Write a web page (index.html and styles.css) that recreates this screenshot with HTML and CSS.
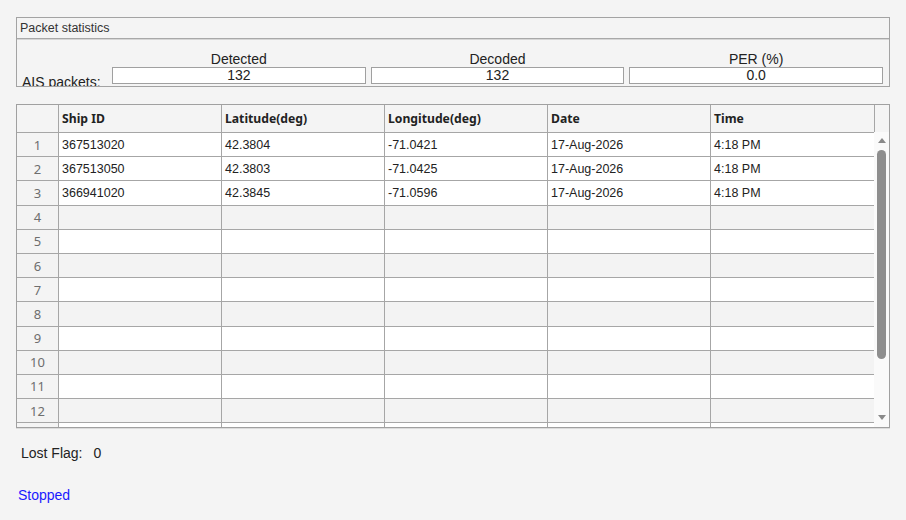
FILE: index.html
```html
<!DOCTYPE html>
<html lang="en">
<head>
    <meta charset="UTF-8">
    <title>AIS Receiver</title>
    <link rel="stylesheet" href="styles.css">
</head>
<body>
    <div class="app">
        <div class="panel">
            <div class="panel-title">Packet statistics</div>
            <div class="panel-body">
                <div class="stat-label">AIS packets:</div>
                <div class="stat">
                    <div class="stat-name">Detected</div>
                    <div class="stat-box">132</div>
                </div>
                <div class="stat">
                    <div class="stat-name">Decoded</div>
                    <div class="stat-box">132</div>
                </div>
                <div class="stat">
                    <div class="stat-name">PER (%)</div>
                    <div class="stat-box">0.0</div>
                </div>
            </div>
        </div>

        <div class="grid-wrap">
            <div class="grid-view">
                <table class="grid">
                    <thead>
                        <tr>
                            <th class="rh"></th>
                            <th>Ship ID</th>
                            <th>Latitude(deg)</th>
                            <th>Longitude(deg)</th>
                            <th>Date</th>
                            <th class="last">Time</th>
                        </tr>
                    </thead>
                    <tbody>
                        <tr class="filled"><td class="rh">1</td><td>367513020</td><td>42.3804</td><td>-71.0421</td><td>17-Aug-2026</td><td class="last">4:18 PM</td></tr>
                        <tr class="filled"><td class="rh">2</td><td>367513050</td><td>42.3803</td><td>-71.0425</td><td>17-Aug-2026</td><td class="last">4:18 PM</td></tr>
                        <tr class="filled"><td class="rh">3</td><td>366941020</td><td>42.3845</td><td>-71.0596</td><td>17-Aug-2026</td><td class="last">4:18 PM</td></tr>
                        <tr class="alt"><td class="rh">4</td><td></td><td></td><td></td><td></td><td class="last"></td></tr>
                        <tr><td class="rh">5</td><td></td><td></td><td></td><td></td><td class="last"></td></tr>
                        <tr class="alt"><td class="rh">6</td><td></td><td></td><td></td><td></td><td class="last"></td></tr>
                        <tr><td class="rh">7</td><td></td><td></td><td></td><td></td><td class="last"></td></tr>
                        <tr class="alt"><td class="rh">8</td><td></td><td></td><td></td><td></td><td class="last"></td></tr>
                        <tr><td class="rh">9</td><td></td><td></td><td></td><td></td><td class="last"></td></tr>
                        <tr class="alt"><td class="rh">10</td><td></td><td></td><td></td><td></td><td class="last"></td></tr>
                        <tr><td class="rh">11</td><td></td><td></td><td></td><td></td><td class="last"></td></tr>
                        <tr class="alt"><td class="rh">12</td><td></td><td></td><td></td><td></td><td class="last"></td></tr>
                        <tr><td class="rh">13</td><td></td><td></td><td></td><td></td><td class="last"></td></tr>
                    </tbody>
                </table>
            </div>
            <div class="scroll-col">
                <div class="scroll-corner"></div>
                <div class="scroll-track">
                    <span class="arrow up"></span>
                    <div class="thumb"></div>
                    <span class="arrow down"></span>
                </div>
            </div>
        </div>

        <div class="lost-flag">
            <span>Lost Flag:</span>
            <span>0</span>
        </div>
        <div class="status">Stopped</div>
    </div>
</body>
</html>
```

FILE: styles.css
```css
body {
    margin: 0;
    background: #f4f4f4;
    font-family: "Liberation Sans", Arial, sans-serif;
    color: #222;
}
.app {
    padding: 17px 17px 0 16px;
    width: 874px;
}
.panel {
    border: 1px solid #a3a3a3;
}
.panel-title {
    height: 20px;
    line-height: 20px;
    padding-left: 3px;
    font-size: 12.5px;
    color: #333;
    border-bottom: 1px solid #a8a8a8;
    box-shadow: 0 1px 0 #d6d6d6;
}
.panel-body {
    display: grid;
    grid-template-columns: 90px repeat(3, 1fr);
    column-gap: 5px;
    padding: 12px 6px 0 0;
    height: 35px;
    overflow: hidden;
}
.stat-label {
    font-size: 14px;
    line-height: 16px;
    padding: 23px 0 0 5px;
    white-space: nowrap;
}
.stat {
    display: flex;
    flex-direction: column;
}
.stat-name {
    font-size: 14px;
    line-height: 16px;
    text-align: center;
}
.stat-box {
    height: 15px;
    line-height: 15px;
    background: #fff;
    border: 1px solid #a0a0a0;
    text-align: center;
    font-size: 14px;
}
.grid-wrap {
    margin-top: 17px;
    height: 322px;
    border: 1px solid #a0a0a0;
    display: flex;
    overflow: hidden;
    box-shadow: 0 1px 0 #dcdcdc;
}
.grid-view {
    width: 857px;
    overflow: hidden;
}
.grid {
    border-collapse: separate;
    border-spacing: 0;
    table-layout: fixed;
    width: 857px;
}
.grid th, .grid td {
    border-right: 1px solid #a6a6a6;
    border-bottom: 1px solid #a6a6a6;
    padding: 0 3px;
    white-space: nowrap;
    overflow: hidden;
    text-align: left;
}
.grid th {
    height: 27px;
    background: #f4f4f4;
    font-family: "Noto Sans", sans-serif;
    font-weight: bold;
    font-size: 12.2px;
    color: #222;
    width: 156px;
}
.grid td {
    height: 23.2px;
    background: #fff;
    font-size: 12.5px;
    color: #222;
}
.grid tr.alt td {
    background: #f3f3f3;
}
.grid th.rh, .grid td.rh {
    width: 35px;
    background: #f4f4f4;
    text-align: center;
    font-family: "Noto Sans", sans-serif;
    font-weight: normal;
    font-size: 13px;
    color: #6e6e6e;
}
.grid th.last, .grid td.last {
    border-right: none;
    width: 157px;
}
.scroll-col {
    width: 15px;
    display: flex;
    flex-direction: column;
}
.scroll-corner {
    height: 27px;
    background: #f4f4f4;
    border-left: 1px solid #a6a6a6;
}
.scroll-track {
    flex: 1;
    background: #fafafa;
    display: flex;
    flex-direction: column;
    align-items: center;
    padding-top: 6px;
}
.arrow {
    width: 0;
    height: 0;
    border-left: 4px solid transparent;
    border-right: 4px solid transparent;
}
.arrow.up {
    border-bottom: 5px solid #8a8a8a;
}
.arrow.down {
    border-top: 5px solid #8a8a8a;
    margin-top: 56px;
}
.thumb {
    margin-top: 7px;
    width: 9px;
    height: 209px;
    border-radius: 5px;
    background: #8e8e8e;
}
.lost-flag {
    margin-top: 17px;
    padding-left: 5px;
    display: flex;
    gap: 11px;
    font-size: 14px;
    line-height: 16px;
}
.status {
    margin-top: 26px;
    padding-left: 2px;
    font-size: 14px;
    line-height: 16px;
    color: #1a1aff;
}
```
